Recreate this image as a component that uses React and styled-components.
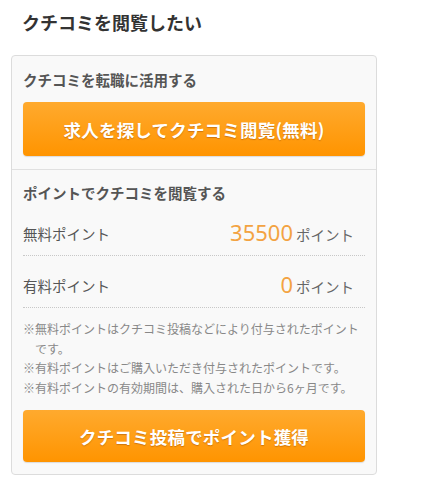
import styled, { createGlobalStyle } from 'styled-components';

const GlobalStyle = createGlobalStyle`
  body {
    margin: 0;
    background: #fff;
    font-family: "Noto Sans CJK JP", "Noto Sans", sans-serif;
  }
`;

const Wrapper = styled.div`
  width: 366px;
  padding: 0 0 0 11px;
`;

const Title = styled.h2`
  margin: 0;
  padding: 10px 0 0 11px;
  height: 55px;
  box-sizing: border-box;
  font-size: 18px;
  line-height: 24px;
  font-weight: 700;
  color: #333;
`;

const Card = styled.div`
  background: #f9f9f9;
  border: 1px solid #dcdcdc;
  border-radius: 4px;
`;

const Section = styled.div`
  padding: ${(p) => p.$pad};
  & + & {
    border-top: 1px solid #e0e0e0;
  }
`;

const Heading = styled.h3`
  margin: 0;
  font-size: 14.5px;
  line-height: 22px;
  font-weight: 700;
  color: #555;
`;

const OrangeButton = styled.button`
  display: flex;
  align-items: center;
  justify-content: center;
  width: 100%;
  height: ${(p) => p.$h}px;
  margin-top: ${(p) => p.$mt}px;
  border: none;
  border-radius: 4px;
  background: linear-gradient(#ffaa2e, #ff9400);
  box-shadow: 0 1px 1px rgba(0, 0, 0, 0.12);
  color: #fff;
  font-family: "Noto Sans CJK JP", "Noto Sans", sans-serif;
  font-size: 17.5px;
  font-weight: 700;
  letter-spacing: 0.2px;
  text-shadow: 0 1px 1px rgba(150, 70, 0, 0.45);
  cursor: pointer;
`;

const Row = styled.div`
  display: flex;
  justify-content: space-between;
  align-items: center;
  height: 52px;
  box-sizing: border-box;
  padding-top: 8px;
  border-bottom: 1px dotted #c8c8c8;
`;

const Label = styled.span`
  font-size: 14.5px;
  line-height: 24px;
  color: #555;
`;

const Value = styled.span`
  display: flex;
  align-items: baseline;
  gap: 3px;
  padding-right: 11px;
  line-height: 24px;
`;

const Num = styled.span`
  font-family: "Noto Sans", sans-serif;
  font-size: 22px;
  color: #f3a342;
`;

const Unit = styled.span`
  font-size: 14.5px;
  color: #666;
`;

const Notes = styled.ul`
  list-style: none;
  margin: 11px 0 0;
  padding: 0;
`;

const Note = styled.li`
  font-size: 12px;
  line-height: 19.5px;
  color: #888;
  padding-left: 1em;
  text-indent: -1em;
`;

export default function App() {
  return (
    <>
      <GlobalStyle />
      <Wrapper>
        <Title>クチコミを閲覧したい</Title>
        <Card>
          <Section $pad="13px 11px 13px">
            <Heading>クチコミを転職に活用する</Heading>
            <OrangeButton $h={54} $mt={11}>求人を探してクチコミ閲覧(無料)</OrangeButton>
          </Section>
          <Section $pad="12px 11px 12px">
            <Heading>ポイントでクチコミを閲覧する</Heading>
            <Row>
              <Label>無料ポイント</Label>
              <Value>
                <Num>35500</Num>
                <Unit>ポイント</Unit>
              </Value>
            </Row>
            <Row>
              <Label>有料ポイント</Label>
              <Value>
                <Num>0</Num>
                <Unit>ポイント</Unit>
              </Value>
            </Row>
            <Notes>
              <Note>※無料ポイントはクチコミ投稿などにより付与されたポイントです。</Note>
              <Note>※有料ポイントはご購入いただき付与されたポイントです。</Note>
              <Note>※有料ポイントの有効期間は、購入された日から6ヶ月です。</Note>
            </Notes>
            <OrangeButton $h={52} $mt={13}>クチコミ投稿でポイント獲得</OrangeButton>
          </Section>
        </Card>
      </Wrapper>
    </>
  );
}
